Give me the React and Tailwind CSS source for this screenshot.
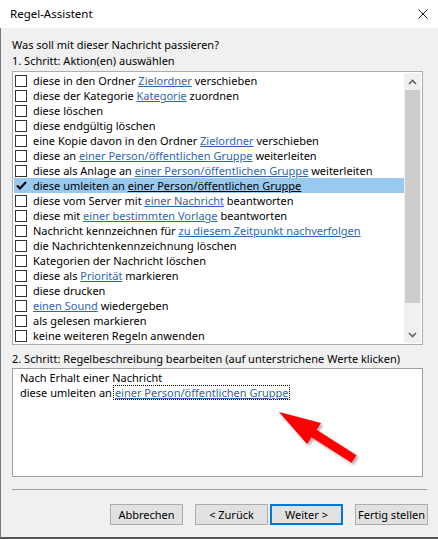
import React from 'react';

const FONT = { fontFamily: '"Noto Sans", "Liberation Sans", sans-serif' };

const actions = [
  ['diese in den Ordner ', { link: 'Zielordner' }, ' verschieben'],
  ['diese der Kategorie ', { link: 'Kategorie' }, ' zuordnen'],
  ['diese löschen'],
  ['diese endgültig löschen'],
  ['eine Kopie davon in den Ordner ', { link: 'Zielordner' }, ' verschieben'],
  ['diese an ', { link: 'einer Person/öffentlichen Gruppe' }, ' weiterleiten'],
  ['diese als Anlage an ', { link: 'einer Person/öffentlichen Gruppe' }, ' weiterleiten'],
  ['diese umleiten an ', { link: 'einer Person/öffentlichen Gruppe' }],
  ['diese vom Server mit ', { link: 'einer Nachricht' }, ' beantworten'],
  ['diese mit ', { link: 'einer bestimmten Vorlage' }, ' beantworten'],
  ['Nachricht kennzeichnen für ', { link: 'zu diesem Zeitpunkt nachverfolgen' }],
  ['die Nachrichtenkennzeichnung löschen'],
  ['Kategorien der Nachricht löschen'],
  ['diese als ', { link: 'Priorität' }, ' markieren'],
  ['diese drucken'],
  [{ link: 'einen Sound' }, ' wiedergeben'],
  ['als gelesen markieren'],
  ['keine weiteren Regeln anwenden'],
];

const SELECTED = 7;

function ActionRow({ parts, selected }) {
  return (
    <div className={`h-[15px] flex items-center pl-[1px] ${selected ? 'bg-[#99c9ef]' : ''}`}>
      {selected ? (
        <div className="w-[12px] h-[12px] flex items-center justify-center shrink-0">
          <svg width="11" height="9" viewBox="0 0 11 9">
            <path d="M1 4.5 L4 7.5 L10 1" fill="none" stroke="#000" strokeWidth="2" />
          </svg>
        </div>
      ) : (
        <div className="w-[12px] h-[12px] border border-[#333] bg-white shrink-0" />
      )}
      <span className="ml-[6px] whitespace-nowrap leading-[15px]">
        {parts.map((p, i) =>
          typeof p === 'string' ? (
            <span key={i} className="whitespace-pre">{p}</span>
          ) : (
            <span key={i} className={`underline ${selected ? 'text-black' : 'text-[#2f66b3]'}`}>{p.link}</span>
          )
        )}
      </span>
    </div>
  );
}

function Button({ children, primary }) {
  return (
    <button
      className={`w-[73px] h-[21px] bg-[#e1e1e1] text-[11px] leading-[15px] text-black whitespace-nowrap flex items-center justify-center ${
        primary ? 'border-2 border-[#0078d7]' : 'border border-[#adadad]'
      }`}
    >
      {children}
    </button>
  );
}

export default function App() {
  return (
    <div className="w-[438px] h-[539px] relative bg-[#f0f0f0] text-[11px] text-black flex flex-col overflow-hidden" style={FONT}>
      {/* title bar */}
      <div className="h-[28px] bg-white flex items-center justify-between pl-[10px] pr-[10px] shrink-0">
        <span className="text-[11.5px]">Regel-Assistent</span>
        <svg width="10" height="10" viewBox="0 0 10 10">
          <path d="M0.5 0.5 L9.5 9.5 M9.5 0.5 L0.5 9.5" stroke="#222" strokeWidth="1" />
        </svg>
      </div>

      <div className="flex-1 flex flex-col border-l border-[#7a7a7a] border-b-2 border-b-[#555] pl-[11px] pt-[9px]">
        <div className="leading-[16px]">Was soll mit dieser Nachricht passieren?</div>
        <div className="leading-[16px]">1. Schritt: Aktion(en) auswählen</div>

        {/* action list */}
        <div className="mt-[2px] w-[411px] h-[274px] border border-[#abadb3] bg-white p-px flex">
          <div className="flex-1 flex flex-col">
            {actions.map((parts, i) => (
              <ActionRow key={i} parts={parts} selected={i === SELECTED} />
            ))}
          </div>
          <div className="w-[17px] bg-[#f0f0f0] flex flex-col">
            <div className="h-[17px] flex items-center justify-center">
              <svg width="9" height="6" viewBox="0 0 9 6">
                <path d="M1 5 L4.5 1.5 L8 5" fill="none" stroke="#606060" strokeWidth="1.6" />
              </svg>
            </div>
            <div className="h-[213px] mx-[1px] bg-[#cdcdcd]" />
            <div className="flex-1" />
            <div className="h-[17px] flex items-center justify-center">
              <svg width="9" height="6" viewBox="0 0 9 6">
                <path d="M1 1 L4.5 4.5 L8 1" fill="none" stroke="#606060" strokeWidth="1.6" />
              </svg>
            </div>
          </div>
        </div>

        <div className="mt-[6px] leading-[16px]">2. Schritt: Regelbeschreibung bearbeiten (auf unterstrichene Werte klicken)</div>

        {/* description */}
        <div className="mt-[1px] w-[411px] h-[109px] border border-[#a0a0a0] bg-white pl-[7px] pt-[1px] leading-[15px]">
          <div>Nach Erhalt einer Nachricht</div>
          <div className="flex items-center">
            <span>diese umleiten an</span>
            <span className="ml-[1px] border border-dotted border-black px-[1px] text-[#2f66b3] underline leading-[13px]">
              einer Person/öffentlichen Gruppe
            </span>
          </div>
        </div>

        <div className="mt-[12px] w-[415px] h-px bg-[#a0a0a0]" />

        <div className="mt-[14px] flex pr-[10px] justify-end">
          <Button>Abbrechen</Button>
          <div className="ml-[12px]">
            <Button>&lt; Zurück</Button>
          </div>
          <div className="ml-[2px]">
            <Button primary>Weiter &gt;</Button>
          </div>
          <div className="ml-[12px]">
            <Button>Fertig stellen</Button>
          </div>
        </div>
      </div>

      {/* red annotation arrow */}
      <svg className="absolute left-0 top-0 pointer-events-none" width="438" height="539" viewBox="0 0 438 539">
        <defs>
          <filter id="sh" x="-20%" y="-20%" width="150%" height="150%">
            <feDropShadow dx="2" dy="2" stdDeviation="1.5" floodColor="#000" floodOpacity="0.35" />
          </filter>
        </defs>
        <polygon
          points="279,412 321,423 316.5,429.8 356.5,455.3 351.5,462.7 311.5,437.2 307,444"
          fill="#ff0000"
          filter="url(#sh)"
        />
      </svg>
    </div>
  );
}
